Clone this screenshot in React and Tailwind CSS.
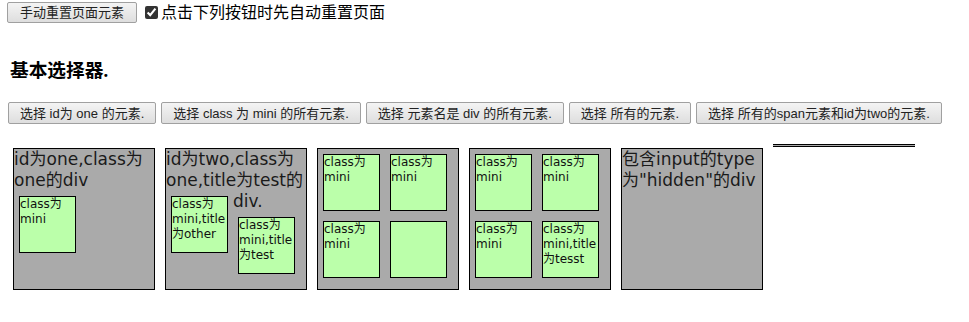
const btn =
  "h-[22px] px-[11px] border border-[#a0a0a0] bg-gradient-to-b from-[#f4f4f4] to-[#dedede] text-[13px] leading-none text-[#222] rounded-[2px] whitespace-nowrap"

const ui = { fontFamily: '"Liberation Sans", "Noto Sans CJK SC", sans-serif' }
const verdana = { fontFamily: '"DejaVu Sans", "Noto Sans CJK SC", sans-serif' }

function Mini({ children }) {
  return (
    <div className="w-[57px] h-[57px] m-[5px] shrink-0 border border-black bg-[#bbffaa] text-[12px] leading-[15px] text-[#111] overflow-hidden">
      {children}
    </div>
  )
}

function Box({ children }) {
  return (
    <div
      className="w-[142px] h-[142px] shrink-0 border border-black bg-[#aaaaaa] text-[17px] leading-[21px] text-[#1a1a1a] overflow-hidden"
      style={verdana}
    >
      {children}
    </div>
  )
}

export default function App() {
  const actions = [
    "选择 id为 one 的元素.",
    "选择 class 为 mini 的所有元素.",
    "选择 元素名是 div 的所有元素.",
    "选择 所有的元素.",
    "选择 所有的span元素和id为two的元素.",
  ]

  return (
    <div className="w-[969px] h-[322px] bg-white overflow-hidden" style={ui}>
      {/* reset bar */}
      <div className="flex items-center pl-[7px] pt-[2px] gap-[8px]">
        <button className="h-[21px] px-[12px] border border-[#a0a0a0] bg-gradient-to-b from-[#f4f4f4] to-[#dedede] text-[13px] leading-none text-[#222] rounded-[2px] whitespace-nowrap">
          手动重置页面元素
        </button>
        <label className="flex items-center gap-[3px] text-[16px] leading-none text-black">
          <input type="checkbox" defaultChecked className="w-[13px] h-[13px] m-0 accent-[#333]" />
          点击下列按钮时先自动重置页面
        </label>
      </div>

      <h3
        className="mt-[37px] ml-[10px] text-[18.7px] font-bold leading-[22px] text-black"
        style={{ fontFamily: '"Liberation Serif", "Noto Sans CJK SC", serif' }}
      >
        基本选择器.
      </h3>

      <div className="flex gap-[5px] pl-[8px] mt-[20px]">
        {actions.map((a) => (
          <button key={a} className={btn}>
            {a}
          </button>
        ))}
      </div>

      <div className="flex items-start gap-[10px] pl-[13px] mt-[24px]">
        <Box>
          <div>id为one,class为 one的div</div>
          <Mini>class为 mini</Mini>
        </Box>

        <Box>
          <div>id为two,class为 one,title为test的</div>
          <div className="flex">
            <Mini>class为 mini,title 为other</Mini>
            <div className="flex flex-col">
              <div>div.</div>
              <Mini>class为 mini,title 为test</Mini>
            </div>
          </div>
        </Box>

        <Box>
          <div className="grid grid-cols-2 w-[134px]">
            <Mini>class为 mini</Mini>
            <Mini>class为 mini</Mini>
            <Mini>class为 mini</Mini>
            <Mini></Mini>
          </div>
        </Box>

        <Box>
          <div className="grid grid-cols-2 w-[134px]">
            <Mini>class为 mini</Mini>
            <Mini>class为 mini</Mini>
            <Mini>class为 mini</Mini>
            <Mini>class为 mini,title 为tesst</Mini>
          </div>
        </Box>

        <Box>
          <div>包含input的type 为"hidden"的div</div>
        </Box>

        <div className="w-[142px] h-[3px] mt-[-4px] shrink-0 border-y border-black bg-[#aaaaaa]" />
      </div>
    </div>
  )
}
